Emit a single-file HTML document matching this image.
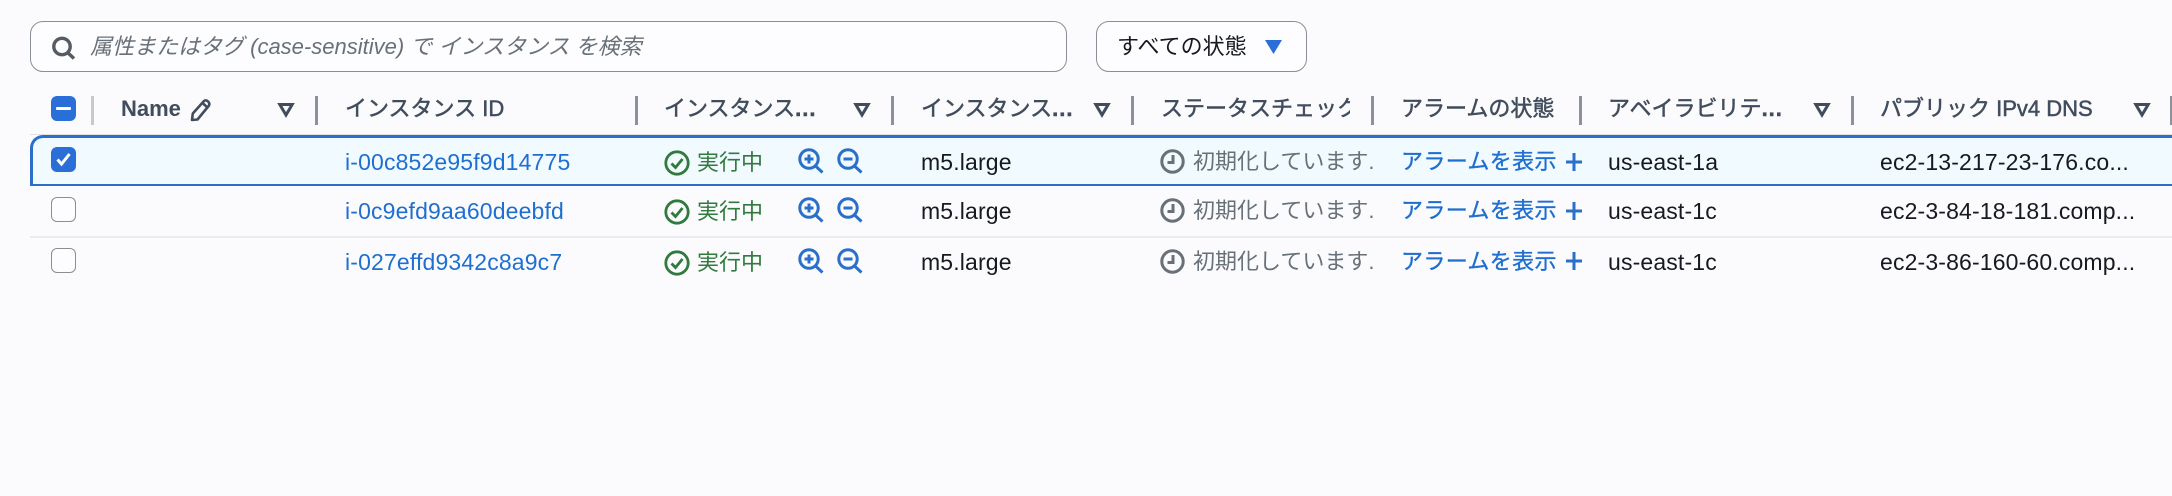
<!DOCTYPE html>
<html lang="ja"><head><meta charset="utf-8"><title>Instances</title>
<style>
html,body{margin:0;padding:0}
body{width:2172px;height:496px;position:relative;overflow:hidden;background:#fbfbfe;font-family:"Liberation Sans","Noto Sans CJK JP",sans-serif;font-size:22px;color:#16191f}
.a{position:absolute;white-space:nowrap;line-height:40px;height:40px}
.t{font-size:23px;letter-spacing:.15px}
.h{top:89px;color:#414d5c;-webkit-text-stroke:.5px #414d5c}
.h i{font-style:normal;letter-spacing:1px;font-weight:bold}
.sep{position:absolute;top:96px;width:3px;height:29px;background:#8d9199}
.l{color:#1f6fd0}
.g{color:#2f7a3c}
.c{color:#687078;overflow:hidden;width:180px}
.al{color:#1f6fd0;-webkit-text-stroke:.35px #1f6fd0;letter-spacing:.35px}
svg{position:absolute;overflow:visible}
.tri{width:16px;height:14px;fill:none;stroke:#414d5c;stroke-width:3}
.zi{fill:none;stroke:#2a6fc9;stroke-width:3}
.ck{fill:none;stroke:#2f7a3c;stroke-width:2.800}
.cl{fill:none;stroke:#687078;stroke-width:3}
.pl{fill:none;stroke:#2a6fc9;stroke-width:3}
.cb{position:absolute;left:51px;width:25px;height:25px;box-sizing:border-box;border-radius:6px}
.off{border:1.5px solid #8a8f96;background:#fdfdff}
.on{background:#2a6fd8}
</style></head><body>
<div style="position:absolute;left:30px;top:21px;width:1037px;height:51px;box-sizing:border-box;border:1.5px solid #8a8f96;border-radius:13px;background:#fdfdff"></div>
<svg style="left:52px;top:36px" width="24" height="24" viewBox="0 0 24 24" fill="none" stroke="#545b64" stroke-width="3.400"><circle cx="10" cy="10.500" r="8.200"/><path d="M15.500 16.500l6.500 6"/></svg>
<div class="a" style="left:90px;top:27px;font-style:italic;color:#687078">属性またはタグ (case-sensitive) で インスタンス を検索</div>
<div style="position:absolute;left:1096px;top:21px;width:211px;height:51px;box-sizing:border-box;border:1.5px solid #8a8f96;border-radius:13px;background:#fdfdff"></div>
<div class="a" style="left:1117px;top:27px;color:#16191f">すべての状態</div>
<svg style="left:1265px;top:40px" width="17" height="14" viewBox="0 0 17 14"><path d="M0 0H17L8.500 14Z" fill="#2a6fd8"/></svg>

<div class="cb on" style="top:96px"><div style="position:absolute;left:5px;top:11px;width:15px;height:3px;background:#fff;border-radius:1px"></div></div>
<div class="sep" style="left:91px;background:#c6c8cc"></div>
<div class="a h" style="left:121px;font-weight:bold;-webkit-text-stroke:0">Name</div>
<svg style="left:190px;top:98px" width="22" height="24" viewBox="0 0 22 24" fill="none" stroke="#414d5c" stroke-width="2.600" stroke-linejoin="round"><path d="M2 22l.800-6.500L14 3c2.200-2 6.500 1.500 5 4.500L7.500 21.500z"/><path d="M12.500 5l5 4.500"/></svg>
<svg class="tri" style="left:278px;top:103px" viewBox="0 0 16 14"><path d="M1.800 1.500H14.200L8 12Z"/></svg>
<div class="sep" style="left:315px"></div>
<div class="a h" style="left:345px">インスタンス ID</div>
<div class="sep" style="left:635px"></div>
<div class="a h" style="left:664px">インスタンス<i>...</i></div>
<svg class="tri" style="left:854px;top:103px" viewBox="0 0 16 14"><path d="M1.800 1.500H14.200L8 12Z"/></svg>
<div class="sep" style="left:891px"></div>
<div class="a h" style="left:921px">インスタンス<i>...</i></div>
<svg class="tri" style="left:1094px;top:103px" viewBox="0 0 16 14"><path d="M1.800 1.500H14.200L8 12Z"/></svg>
<div class="sep" style="left:1131px"></div>
<div class="a h" style="left:1161px;width:189px;overflow:hidden">ステータスチェック</div>
<div class="sep" style="left:1371px"></div>
<div class="a h" style="left:1401px">アラームの状態</div>
<div class="sep" style="left:1579px"></div>
<div class="a h" style="left:1608px">アベイラビリテ<i>...</i></div>
<svg class="tri" style="left:1814px;top:103px" viewBox="0 0 16 14"><path d="M1.800 1.500H14.200L8 12Z"/></svg>
<div class="sep" style="left:1851px"></div>
<div class="a h" style="left:1880px">パブリック IPv4 DNS</div>
<svg class="tri" style="left:2134px;top:103px" viewBox="0 0 16 14"><path d="M1.800 1.500H14.200L8 12Z"/></svg>
<div class="sep" style="left:2170px"></div>

<div style="position:absolute;left:30px;top:134px;width:2142px;height:1px;background:#dfe1e5"></div>
<div style="position:absolute;left:30px;top:135px;width:2160px;height:51px;box-sizing:border-box;background:#f1faff;border-top:3px solid #2a6fc9;border-left:3px solid #2a6fc9;border-bottom:2px solid #2a6fc9;border-top-left-radius:13px"></div>
<div style="position:absolute;left:30px;top:236px;width:2142px;height:1.500px;background:#e9ebef"></div>

<div class="cb on" style="top:147px"><svg style="left:5px;top:6px" width="15" height="13" viewBox="0 0 15 13" fill="none" stroke="#fff" stroke-width="3"><path d="M1.500 6.500l4 4.500 8-10"/></svg></div>
<div class="cb off" style="top:197px"></div>
<div class="cb off" style="top:248px"></div>

<div class="a l t" style="left:345px;top:142px">i-00c852e95f9d14775</div>
<div class="a l t" style="left:345px;top:191px">i-0c9efd9aa60deebfd</div>
<div class="a l t" style="left:345px;top:242px">i-027effd9342c8a9c7</div>

<!-- status row 1 -->
<svg class="ck" style="left:664px;top:150px" width="26" height="26" viewBox="0 0 26 26"><circle cx="13" cy="13" r="11.200"/><path d="M7.500 13.500l4 4 7-8.500"/></svg>
<div class="a g" style="left:697px;top:143px">実行中</div>
<svg class="zi" style="left:798px;top:148px" width="26" height="26" viewBox="0 0 26 26"><circle cx="11" cy="11" r="9.200"/><path d="M17 17.500l7.500 7M6.500 11h9M11 6.500v9"/></svg>
<svg class="zi" style="left:837px;top:148px" width="26" height="26" viewBox="0 0 26 26"><circle cx="11" cy="11" r="9.200"/><path d="M17 17.500l7.500 7M6.500 11h9"/></svg>
<!-- status row 2 -->
<svg class="ck" style="left:664px;top:199px" width="26" height="26" viewBox="0 0 26 26"><circle cx="13" cy="13" r="11.200"/><path d="M7.500 13.500l4 4 7-8.500"/></svg>
<div class="a g" style="left:697px;top:192px">実行中</div>
<svg class="zi" style="left:798px;top:197px" width="26" height="26" viewBox="0 0 26 26"><circle cx="11" cy="11" r="9.200"/><path d="M17 17.500l7.500 7M6.500 11h9M11 6.500v9"/></svg>
<svg class="zi" style="left:837px;top:197px" width="26" height="26" viewBox="0 0 26 26"><circle cx="11" cy="11" r="9.200"/><path d="M17 17.500l7.500 7M6.500 11h9"/></svg>
<!-- status row 3 -->
<svg class="ck" style="left:664px;top:250px" width="26" height="26" viewBox="0 0 26 26"><circle cx="13" cy="13" r="11.200"/><path d="M7.500 13.500l4 4 7-8.500"/></svg>
<div class="a g" style="left:697px;top:243px">実行中</div>
<svg class="zi" style="left:798px;top:248px" width="26" height="26" viewBox="0 0 26 26"><circle cx="11" cy="11" r="9.200"/><path d="M17 17.500l7.500 7M6.500 11h9M11 6.500v9"/></svg>
<svg class="zi" style="left:837px;top:248px" width="26" height="26" viewBox="0 0 26 26"><circle cx="11" cy="11" r="9.200"/><path d="M17 17.500l7.500 7M6.500 11h9"/></svg>

<div class="a t" style="left:921px;top:142px">m5.large</div>
<div class="a t" style="left:921px;top:191px">m5.large</div>
<div class="a t" style="left:921px;top:242px">m5.large</div>

<svg class="cl" style="left:1160px;top:149px" width="25" height="25" viewBox="0 0 25 25"><circle cx="12.500" cy="12.500" r="10.700"/><path d="M13 6v7.500H7.500"/></svg>
<div class="a c" style="left:1193px;top:142px">初期化しています...</div>
<svg class="cl" style="left:1160px;top:198px" width="25" height="25" viewBox="0 0 25 25"><circle cx="12.500" cy="12.500" r="10.700"/><path d="M13 6v7.500H7.500"/></svg>
<div class="a c" style="left:1193px;top:191px">初期化しています...</div>
<svg class="cl" style="left:1160px;top:249px" width="25" height="25" viewBox="0 0 25 25"><circle cx="12.500" cy="12.500" r="10.700"/><path d="M13 6v7.500H7.500"/></svg>
<div class="a c" style="left:1193px;top:242px">初期化しています...</div>

<div class="a al" style="left:1401px;top:142px">アラームを表示</div>
<svg class="pl" style="left:1566px;top:152px" width="16" height="20" viewBox="0 0 16 20"><path d="M0 10H16M8 1V19"/></svg>
<div class="a al" style="left:1401px;top:191px">アラームを表示</div>
<svg class="pl" style="left:1566px;top:201px" width="16" height="20" viewBox="0 0 16 20"><path d="M0 10H16M8 1V19"/></svg>
<div class="a al" style="left:1401px;top:242px">アラームを表示</div>
<svg class="pl" style="left:1566px;top:251px" width="16" height="20" viewBox="0 0 16 20"><path d="M0 10H16M8 1V19"/></svg>

<div class="a t" style="left:1608px;top:142px">us-east-1a</div>
<div class="a t" style="left:1608px;top:191px">us-east-1c</div>
<div class="a t" style="left:1608px;top:242px">us-east-1c</div>

<div class="a t" style="left:1880px;top:142px">ec2-13-217-23-176.co...</div>
<div class="a t" style="left:1880px;top:191px">ec2-3-84-18-181.comp...</div>
<div class="a t" style="left:1880px;top:242px">ec2-3-86-160-60.comp...</div>
</body></html>
